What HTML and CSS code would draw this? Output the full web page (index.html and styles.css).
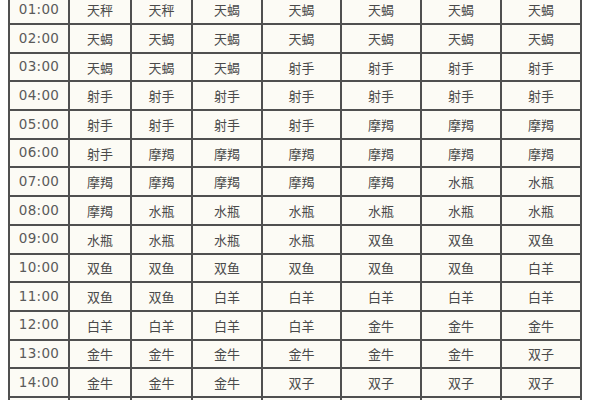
FILE: index.html
```html
<!DOCTYPE html>
<html lang="zh">
<head>
<meta charset="utf-8">
<title>星座时间表</title>
<link rel="stylesheet" href="styles.css">
</head>
<body>
<div class="page">
  <div class="grid" id="grid">
    <div class="cell time">01:00</div><div class="cell">天秤</div><div class="cell">天秤</div><div class="cell">天蝎</div><div class="cell">天蝎</div><div class="cell">天蝎</div><div class="cell">天蝎</div><div class="cell">天蝎</div>
    <div class="cell time">02:00</div><div class="cell">天蝎</div><div class="cell">天蝎</div><div class="cell">天蝎</div><div class="cell">天蝎</div><div class="cell">天蝎</div><div class="cell">天蝎</div><div class="cell">天蝎</div>
    <div class="cell time">03:00</div><div class="cell">天蝎</div><div class="cell">天蝎</div><div class="cell">天蝎</div><div class="cell">射手</div><div class="cell">射手</div><div class="cell">射手</div><div class="cell">射手</div>
    <div class="cell time">04:00</div><div class="cell">射手</div><div class="cell">射手</div><div class="cell">射手</div><div class="cell">射手</div><div class="cell">射手</div><div class="cell">射手</div><div class="cell">射手</div>
    <div class="cell time">05:00</div><div class="cell">射手</div><div class="cell">射手</div><div class="cell">射手</div><div class="cell">射手</div><div class="cell">摩羯</div><div class="cell">摩羯</div><div class="cell">摩羯</div>
    <div class="cell time">06:00</div><div class="cell">射手</div><div class="cell">摩羯</div><div class="cell">摩羯</div><div class="cell">摩羯</div><div class="cell">摩羯</div><div class="cell">摩羯</div><div class="cell">摩羯</div>
    <div class="cell time">07:00</div><div class="cell">摩羯</div><div class="cell">摩羯</div><div class="cell">摩羯</div><div class="cell">摩羯</div><div class="cell">摩羯</div><div class="cell">水瓶</div><div class="cell">水瓶</div>
    <div class="cell time">08:00</div><div class="cell">摩羯</div><div class="cell">水瓶</div><div class="cell">水瓶</div><div class="cell">水瓶</div><div class="cell">水瓶</div><div class="cell">水瓶</div><div class="cell">水瓶</div>
    <div class="cell time">09:00</div><div class="cell">水瓶</div><div class="cell">水瓶</div><div class="cell">水瓶</div><div class="cell">水瓶</div><div class="cell">双鱼</div><div class="cell">双鱼</div><div class="cell">双鱼</div>
    <div class="cell time">10:00</div><div class="cell">双鱼</div><div class="cell">双鱼</div><div class="cell">双鱼</div><div class="cell">双鱼</div><div class="cell">双鱼</div><div class="cell">双鱼</div><div class="cell">白羊</div>
    <div class="cell time">11:00</div><div class="cell">双鱼</div><div class="cell">双鱼</div><div class="cell">白羊</div><div class="cell">白羊</div><div class="cell">白羊</div><div class="cell">白羊</div><div class="cell">白羊</div>
    <div class="cell time">12:00</div><div class="cell">白羊</div><div class="cell">白羊</div><div class="cell">白羊</div><div class="cell">白羊</div><div class="cell">金牛</div><div class="cell">金牛</div><div class="cell">金牛</div>
    <div class="cell time">13:00</div><div class="cell">金牛</div><div class="cell">金牛</div><div class="cell">金牛</div><div class="cell">金牛</div><div class="cell">金牛</div><div class="cell">金牛</div><div class="cell">双子</div>
    <div class="cell time">14:00</div><div class="cell">金牛</div><div class="cell">金牛</div><div class="cell">金牛</div><div class="cell">双子</div><div class="cell">双子</div><div class="cell">双子</div><div class="cell">双子</div>
    <div class="cell"></div><div class="cell"></div><div class="cell"></div><div class="cell"></div><div class="cell"></div><div class="cell"></div><div class="cell"></div><div class="cell"></div>
  </div>
</div>
</body>
</html>
```

FILE: styles.css
```css
html, body {
  margin: 0;
  padding: 0;
  background: #ffffff;
  overflow: hidden;
}
.page {
  width: 600px;
  height: 400px;
  overflow: hidden;
  padding-left: 8px;
  box-sizing: border-box;
}
.grid {
  display: grid;
  grid-template-columns: 58px 60px 59px 68px 77px 78px 78px 78px;
  grid-auto-rows: 26.69px;
  gap: 2px;
  padding: 2px;
  background: #505050;
  width: max-content;
  margin-top: -5.7px;
}
.cell {
  background: #fcfbf5;
  display: flex;
  align-items: center;
  justify-content: center;
  color: #4a4a4a;
  font-family: "Noto Sans CJK SC", "DejaVu Sans", sans-serif;
  font-size: 13px;
  line-height: 1;
}
.cell.time {
  font-family: "DejaVu Sans", Verdana, sans-serif;
  font-size: 13.5px;
  color: #5a5a5a;
  letter-spacing: 0.3px;
}
```
